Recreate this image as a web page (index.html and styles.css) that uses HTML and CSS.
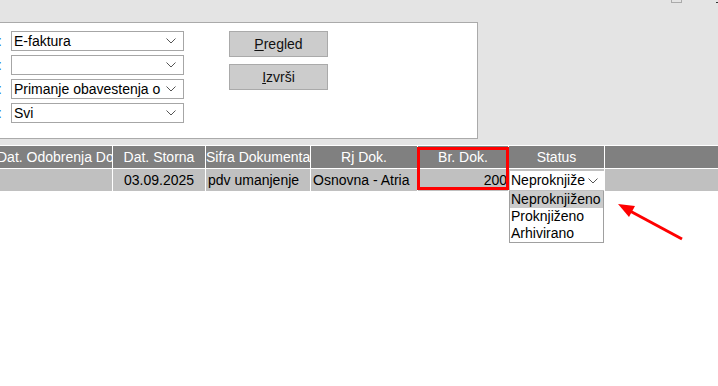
FILE: index.html
```html
<!DOCTYPE html>
<html lang="sr">
<head>
    <meta charset="UTF-8">
    <meta name="viewport" content="width=device-width, initial-scale=1.0">
    <title>Dokumenti</title>
    <link rel="stylesheet" href="styles.css">
</head>
<body>
    <div class="top">
        <div class="win-box"></div>
        <div class="win-dot"></div>
        <div class="panel">
            <div class="fields">
                <div class="field">
                    <span class="lbl"><span>:</span></span>
                    <div class="dd"><span class="dd-text">E-faktura</span><svg class="chev" width="10" height="6" viewBox="0 0 10 6"><path d="M0.5 0.5 L5 5 L9.5 0.5" fill="none" stroke="#555" stroke-width="1"/></svg></div>
                </div>
                <div class="field">
                    <span class="lbl"><span>:</span></span>
                    <div class="dd"><span class="dd-text"></span><svg class="chev" width="10" height="6" viewBox="0 0 10 6"><path d="M0.5 0.5 L5 5 L9.5 0.5" fill="none" stroke="#555" stroke-width="1"/></svg></div>
                </div>
                <div class="field">
                    <span class="lbl"><span>:</span></span>
                    <div class="dd"><span class="dd-text">Primanje obavestenja o</span><svg class="chev" width="10" height="6" viewBox="0 0 10 6"><path d="M0.5 0.5 L5 5 L9.5 0.5" fill="none" stroke="#555" stroke-width="1"/></svg></div>
                </div>
                <div class="field">
                    <span class="lbl"><span>:</span></span>
                    <div class="dd"><span class="dd-text">Svi</span><svg class="chev" width="10" height="6" viewBox="0 0 10 6"><path d="M0.5 0.5 L5 5 L9.5 0.5" fill="none" stroke="#555" stroke-width="1"/></svg></div>
                </div>
            </div>
            <div class="buttons">
                <button class="btn"><u>P</u>regled</button>
                <button class="btn"><u>I</u>zvrši</button>
            </div>
        </div>
    </div>

    <div class="grid-wrap">
        <div class="grid">
            <div class="th first">Dat. Odobrenja Do</div>
            <div class="th">Dat. Storna</div>
            <div class="th">Sifra Dokumenta</div>
            <div class="th">Rj Dok.</div>
            <div class="th">Br. Dok.</div>
            <div class="th">Status</div>
            <div class="th"></div>

            <div class="td"></div>
            <div class="td center">03.09.2025</div>
            <div class="td">pdv umanjenje</div>
            <div class="td">Osnovna - Atria</div>
            <div class="td right">200</div>
            <div class="td status">
                <div class="mini-dd"><span class="dd-text">Neproknjiženo</span><svg class="chev" width="10" height="6" viewBox="0 0 10 6"><path d="M0.5 0.5 L5 5 L9.5 0.5" fill="none" stroke="#555" stroke-width="1"/></svg></div>
            </div>
            <div class="td"></div>
        </div>

        <div class="mark"></div>

        <ul class="options">
            <li class="sel">Neproknjiženo</li>
            <li>Proknjiženo</li>
            <li>Arhivirano</li>
        </ul>

        <svg class="arrow" width="80" height="50" viewBox="0 0 80 50">
            <line x1="72" y1="43" x2="20" y2="15" stroke="#f00" stroke-width="3"/>
            <polygon points="8,8 25,10 19,21" fill="#f00"/>
        </svg>
    </div>
</body>
</html>
```

FILE: styles.css
```css
body {
    margin: 0;
    min-height: 386px;
    background-color: #fff;
    color: #000;
    font-family: "Liberation Sans", Arial, sans-serif;
    font-size: 14px;
}
.top {
    position: relative;
    height: 145px;
    padding-top: 22px;
    box-sizing: border-box;
    background-color: #e4e4e4;
}
.win-box {
    position: absolute;
    left: 671px;
    top: -7px;
    width: 9px;
    height: 8px;
    border: 1px solid #aaa;
}
.win-dot {
    position: absolute;
    left: 716px;
    top: 2px;
    width: 2px;
    height: 1px;
    background-color: #333;
}
.panel {
    display: flex;
    width: 478px;
    height: 117px;
    box-sizing: border-box;
    padding-top: 8px;
    background-color: #fff;
    border: 1px solid #aaa;
    border-left: none;
}
.fields {
    display: flex;
    flex-direction: column;
    gap: 4px;
}
.field {
    display: flex;
    align-items: center;
    gap: 8px;
}
.lbl {
    width: 3px;
    overflow: hidden;
    color: #2a78d6;
    line-height: 20px;
}
.lbl span {
    display: inline-block;
    margin-left: -2px;
}
.dd {
    display: flex;
    align-items: center;
    width: 173px;
    height: 20px;
    box-sizing: border-box;
    border: 1px solid #a6a6a6;
    background-color: #fff;
    padding: 0 7px 0 2px;
}
.dd-text {
    flex: 1;
    overflow: hidden;
    white-space: nowrap;
    line-height: 18px;
}
.chev {
    flex: none;
    margin-left: 3px;
}
.buttons {
    display: flex;
    flex-direction: column;
    gap: 7px;
    margin-left: 45px;
}
.btn {
    width: 99px;
    height: 26px;
    padding: 0;
    border: 1px solid #aaa;
    background-color: #ccc;
    color: #111;
    font-family: inherit;
    font-size: 14px;
}
.grid-wrap {
    position: relative;
    min-height: 240px;
    padding-top: 1px;
}
.grid {
    display: grid;
    grid-template-columns: 112px 92px 104px 106px 90px 95px 1fr;
    grid-auto-rows: 22px;
    gap: 1px;
    background-color: #fff;
}
.th,
.td {
    overflow: hidden;
    white-space: nowrap;
    line-height: 22px;
}
.th {
    background-color: #808080;
    color: #fff;
    text-align: center;
}
.th.first {
    text-align: left;
    text-indent: -3px;
}
.td {
    background-color: #c0c0c0;
    padding: 0 2px;
}
.td.center {
    text-align: center;
}
.td.right {
    text-align: right;
    padding-right: 1px;
}
.td.status {
    padding: 2px 0 1px 1px;
}
.mini-dd {
    display: flex;
    align-items: center;
    height: 19px;
    padding: 0 6px 0 1px;
    background-color: #fff;
}
.mini-dd .dd-text {
    line-height: 19px;
}
.mark {
    position: absolute;
    left: 417px;
    top: 2px;
    width: 86px;
    height: 37px;
    border: 3px solid #f00;
}
.options {
    position: absolute;
    left: 509px;
    top: 46px;
    z-index: 2;
    width: 95px;
    box-sizing: border-box;
    margin: 0;
    padding: 0;
    list-style: none;
    background-color: #fff;
    border: 1px solid #a0a0a0;
    border-top: none;
}
.options li {
    height: 17px;
    line-height: 17px;
    padding-left: 1px;
}
.options li.sel {
    background-color: #cbcbcb;
}
.arrow {
    position: absolute;
    left: 610px;
    top: 51px;
    z-index: 2;
}
```
